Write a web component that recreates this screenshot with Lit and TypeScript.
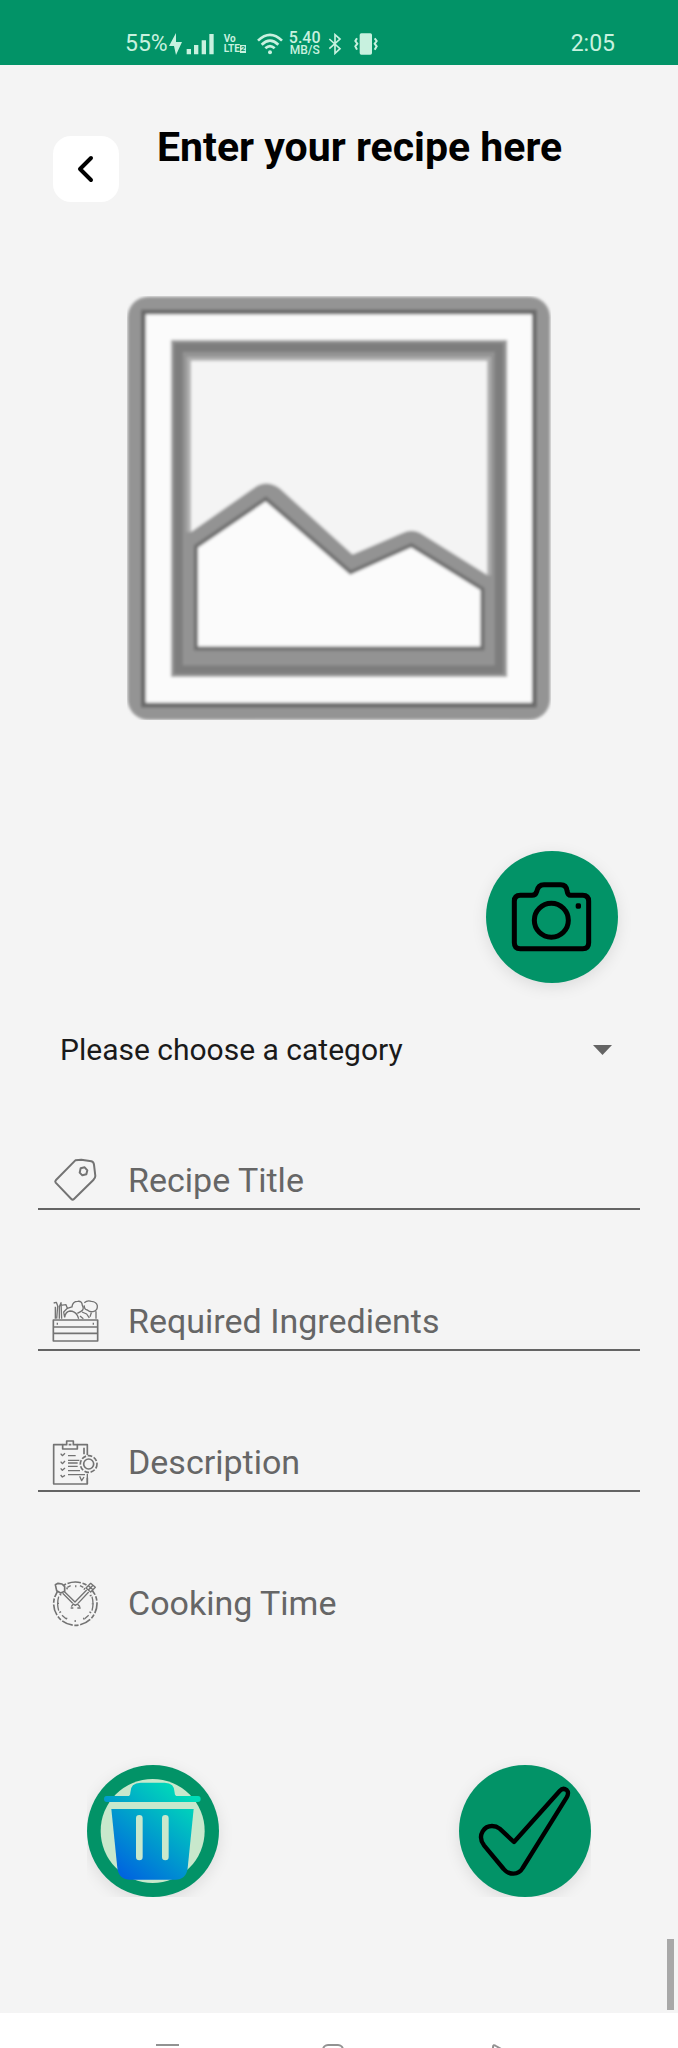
import { LitElement, html, css, svg, nothing } from "lit";
import { customElement, property } from "lit/decorators.js";

const tagIcon = svg`
  <path d="M136 61L154 59L184 64Q191 66 192 74L196 108Q196 114 190 120L132 177Q128 181 124 177L77 128Q74 124 78 120Z" stroke-width="6"/>
  <path d="M152 85L164 82L172 91L169 103L157 106L149 98Z" stroke-width="6"/>`;

const crateIcon = svg`
  <path d="M70 540H203V603H70ZM70 561H203M70 580H203" stroke-width="5"/>
  <path d="M82 548V554M190 548V554" stroke-width="4"/>
  <path d="M71 489L79 487L84 500M76 500V536M83 498L80 536M88 536V500L93 488L95 536M92 496L108 494L112 505L101 516L104 532M104 532Q106 515 120 513Q134 513 142 526L146 536M112 505L128 500M126 500Q128 484 143 484Q156 482 157 496Q164 508 153 514L142 520M163 488Q172 480 184 484Q199 485 202 497Q203 511 192 514Q181 518 172 510Q162 508 163 496M156 516L170 522L178 534M184 518L180 530M198 514V536M150 528L160 536" stroke-width="4"/>`;

const clipboardIcon = svg`
  <path d="M98 73H71V191H172V172M142 73H172V104" stroke-width="5"/>
  <path d="M98 73V86H142V73H130V62H110V73ZM116 73H124M162 82V102" stroke-width="5"/>
  <path d="M92 100L97 106L105 99M92 124L97 130L105 122M92 144L97 150L105 143M92 164L97 170L105 165" stroke-width="4"/>
  <path d="M114 106H137M114 120H148M114 128H143M114 138H143M114 151H150M114 163H165" stroke-width="4"/>
  <circle cx="176" cy="131" r="15" stroke-width="5"/>
  <circle cx="176" cy="131" r="25" stroke-width="5" stroke-dasharray="14 5"/>
  <path d="M149 168L155 181L162 170M172 160V190" stroke-width="4"/>`;

const clockIcon = svg`
  <circle cx="136" cy="551" r="65" stroke-width="5" stroke-dasharray="34 5 13 5" stroke-dashoffset="17" transform="rotate(-90 136 551)"/>
  <circle cx="136" cy="551" r="52" stroke-width="6" stroke-dasharray="4 23.200" stroke-dashoffset="2"/>
  <path d="M86 530Q80 551 86 572M186 530Q192 551 186 572M96 586L108 596M176 586L164 596M112 502L122 497M150 497L160 502" stroke-width="4"/>
  <path d="M102 514L135 546L170 510M98 520L128 550M176 516L144 550M124 560L130 552L136 556L142 552L150 560M122 564H130M142 564H152" stroke-width="4"/>
  <path d="M76 494L84 490L96 492L104 500L104 514L92 519L80 512Z" stroke-width="5" fill="#f4f4f4"/>
  <path d="M168 504L182 490L196 502L182 516ZM175 497L189 509M189 496L175 510" stroke-width="4" fill="#f4f4f4"/>`;

const backIcon = html`<svg class="chevron" viewBox="0 0 24 36" aria-hidden="true"><path d="M17 7L6 18L17 29" /></svg>`;

@customElement("status-bar")
class StatusBar extends LitElement {
  static styles = css`
    :host {
      display: flex;
      align-items: center;
      box-sizing: border-box;
      height: 65px;
      padding: 22px 63px 0 125px;
      background: #029367;
      color: #c8f1df;
      font-size: 23px;
      line-height: 24px;
    }
    svg { flex: none; fill: currentColor; }
    .bolt { width: 14px; height: 24px; }
    .signal { width: 28px; height: 22px; margin-left: 4px; }
    .volte { width: 24px; margin-left: 10px; font-size: 10px; line-height: 10px; font-weight: 700; }
    .volte div { display: flex; align-items: center; }
    .sim { background: currentColor; }
    .sim span { color: #029367; padding: 0 1px; font-size: 8px; line-height: 8px; display: block; }
    .wifi { width: 26px; height: 22px; margin-left: 9px; }
    .speed { width: 32px; margin-left: 6px; text-align: center; font-weight: 500; font-size: 16px; line-height: 12px; }
    .unit { font-size: 12px; line-height: 12px; }
    .bluetooth { width: 14px; height: 22px; margin-left: 7px; }
    .vibrate { width: 24px; height: 22px; margin-left: 12px; }
    .time { margin-left: auto; }
  `;

  render() {
    return html`
      <span>55%</span>
      <svg class="bolt" viewBox="0 0 14 24"><path d="M8 1L1 14H6L8 23L14 10H8Z" /></svg>
      <svg class="signal" viewBox="0 0 84 66">
        <path d="M2 48h13v16H2zM24 36h13v28H24zM47 22h13v42H47zM70 3h13v61H70z" />
      </svg>
      <div class="volte">
        <div>Vo</div>
        <div>LTE<span class="sim"><span>2</span></span></div>
      </div>
      <svg class="wifi" viewBox="0 0 78 66">
        <path d="M3 23Q39 -12 75 23M14 35Q39 11 64 35M25 46Q39 33 53 46" fill="none" stroke="currentColor" stroke-width="8" />
        <circle cx="39" cy="58" r="6" />
      </svg>
      <div class="speed">
        <div>5.40</div>
        <div class="unit">MB/S</div>
      </div>
      <svg class="bluetooth" viewBox="0 0 42 66">
        <path d="M4 18L36 47L21 61V5L36 18L4 47" fill="none" stroke="currentColor" stroke-width="5" />
      </svg>
      <svg class="vibrate" viewBox="0 0 72 66">
        <rect x="17" y="1" width="37" height="64" rx="5" />
        <path d="M9 16L4 24L10 32L4 40L9 50M62 16L68 24L62 32L68 40L62 50" fill="none" stroke="currentColor" stroke-width="6" />
      </svg>
      <span class="time">2:05</span>
    `;
  }
}

@customElement("recipe-field")
class RecipeField extends LitElement {
  @property() label = "";
  @property({ attribute: false }) icon: unknown = nothing;
  @property() box = "0 0 135 135";
  @property({ type: Boolean, reflect: true }) plain = false;

  static styles = css`
    :host {
      display: flex;
      align-items: center;
      gap: 30px;
      height: 56px;
      padding: 0 15px;
      border-bottom: 2px solid #646464;
    }
    :host([plain]) { border-color: transparent; }
    label { flex: none; display: flex; }
    .icon {
      width: 45px;
      height: 45px;
      fill: none;
      stroke: #737373;
      stroke-linejoin: round;
      overflow: visible;
    }
    input {
      flex: 1;
      min-width: 0;
      height: 48px;
      padding: 0;
      border: 0;
      outline: 0;
      background: none;
      color: #212121;
      font: 34px/48px Roboto, sans-serif;
    }
    input::placeholder { color: #666; opacity: 1; }
  `;

  render() {
    return html`
      <label for="entry"><svg class="icon" viewBox=${this.box} aria-hidden="true">${this.icon}</svg></label>
      <input id="entry" type="text" aria-label=${this.label} placeholder=${this.label} />
    `;
  }
}

@customElement("app-root")
class AppRoot extends LitElement {
  static styles = css`
    :host {
      display: flex;
      flex-direction: column;
      min-height: 100vh;
      background: #f4f4f4;
      font-family: Roboto, sans-serif;
    }
    main { position: relative; flex: 1; }
    header {
      display: flex;
      align-items: flex-start;
      gap: 38px;
      padding: 58px 53px 0;
    }
    h1 { margin: 0; font-size: 41px; line-height: 48px; font-weight: 700; color: #000; }
    button { border: 0; padding: 0; cursor: pointer; }
    .back {
      flex: none;
      display: grid;
      place-items: center;
      width: 66px;
      height: 66px;
      margin-top: 13px;
      border-radius: 18px;
      background: #fff;
    }
    .chevron {
      width: 24px;
      height: 36px;
      fill: none;
      stroke: #000;
      stroke-width: 4;
      stroke-linecap: round;
      stroke-linejoin: round;
    }
    .photo { display: block; width: 62.5%; margin: 94px auto 0; }
    .fab {
      display: block;
      width: 132px;
      height: 132px;
      border-radius: 50%;
      background: #029367;
      box-shadow: 0 4px 16px rgba(0, 0, 0, 0.1);
    }
    .fab svg { display: block; width: 100%; height: 100%; }
    .line { fill: none; stroke: #000; stroke-linejoin: round; }
    .camera { margin: 131px 60px 0 auto; }
    .category {
      display: grid;
      align-items: center;
      height: 60px;
      margin: 37px 60px 72px;
    }
    .category > * { grid-area: 1 / 1; }
    select {
      appearance: none;
      width: 100%;
      height: 60px;
      padding: 0;
      border: 0;
      background: none;
      color: #1a1a1a;
      font: 30px/60px Roboto, sans-serif;
    }
    .arrow { width: 19px; height: 10px; justify-self: end; margin-right: 6px; fill: #646464; pointer-events: none; }
    .fields { display: grid; gap: 83px; margin: 0 38px; }
    .actions {
      display: flex;
      justify-content: space-between;
      margin: 108px 87px 0;
      padding-top: 24px;
      overflow: hidden;
    }
    .scrollbar {
      position: absolute;
      right: 4px;
      bottom: 3px;
      width: 7px;
      height: 71px;
      background: #a8a8a8;
    }
    nav {
      display: flex;
      justify-content: space-between;
      align-items: flex-start;
      box-sizing: border-box;
      height: 35px;
      padding: 30px 167px 0 155px;
      background: #fff;
      overflow: hidden;
    }
    nav button { background: none; height: 24px; }
    nav svg { display: block; width: 26px; height: 24px; fill: none; stroke: #929292; stroke-width: 2; stroke-linejoin: round; }
  `;

  private photo() {
    return html`
      <svg class="photo" viewBox="51 46 1272 1274" role="img" aria-label="Recipe photo">
        <defs>
          <filter id="soft" x="-5%" y="-5%" width="110%" height="110%"><feGaussianBlur stdDeviation="5" /></filter>
        </defs>
        <g filter="url(#soft)">
          <rect x="53" y="48" width="1268" height="1270" rx="62" fill="#949494" />
          <rect x="100" y="94" width="1174" height="1180" fill="#fbfbfb" stroke="#696969" stroke-width="14" />
          <rect x="187" y="182" width="1001" height="1004" fill="#939393" />
          <path d="M205 200H1168V1168H205Z" fill="none" stroke="#7d7d7d" stroke-width="26" />
          <path d="M187 182H1188V1186H187Z" fill="none" stroke="#999" stroke-width="8" />
          <path d="M242 238H1135V885L930 757Q905 745 880 757L728 822L510 624Q468 594 430 624L242 755Z" fill="#f4f4f4" />
          <path d="M236 755V234H1138V885" fill="none" stroke="#adadad" stroke-width="12" />
          <path d="M258 798L468 655L722 876L905 794L1118 926V1104H258Z" fill="#fbfbfb" stroke="#707070" stroke-width="12" />
        </g>
      </svg>
    `;
  }

  render() {
    return html`
      <status-bar></status-bar>
      <main>
        <header>
          <button class="back" aria-label="Back">${backIcon}</button>
          <h1>Enter your recipe here</h1>
        </header>
        ${this.photo()}
        <button class="fab camera" aria-label="Take photo">
          <svg viewBox="78 62 396 396">
            <g class="line" stroke-width="15">
              <path d="M163 213Q163 195 181 195H216Q227 195 230 184Q234 163 252 163H302Q319 163 321 181Q323 195 332 195H368Q386 195 386 213V337Q386 355 368 355H181Q163 355 163 337Z" />
              <circle cx="274" cy="270" r="51" />
            </g>
            <rect x="347" y="219" width="16" height="16" rx="5" />
          </svg>
        </button>
        <div class="category">
          <select aria-label="Category">
            <option>Please choose a category</option>
          </select>
          <svg class="arrow" viewBox="0 0 19 10" aria-hidden="true"><path d="M0 0H19L9.500 10Z" /></svg>
        </div>
        <div class="fields">
          <recipe-field label="Recipe Title" box="69 54 135 135" .icon=${tagIcon}></recipe-field>
          <recipe-field label="Required Ingredients" box="69 477 135 135" .icon=${crateIcon}></recipe-field>
          <recipe-field label="Description" box="69 59 135 135" .icon=${clipboardIcon}></recipe-field>
          <recipe-field label="Cooking Time" box="69 483 135 135" .icon=${clockIcon} plain></recipe-field>
        </div>
        <div class="actions">
          <button class="fab" aria-label="Delete recipe">
            <svg viewBox="50 75 396 396">
              <defs>
                <linearGradient id="bin" gradientUnits="userSpaceOnUse" x1="150" y1="410" x2="350" y2="160">
                  <stop offset="0" stop-color="#0062e0" />
                  <stop offset="1" stop-color="#00dcb8" />
                </linearGradient>
              </defs>
              <circle cx="247" cy="273" r="156" fill="#c8e8cc" />
              <g fill="url(#bin)">
                <path d="M109 168H172Q180 168 180 158Q180 128 211 128H283Q313 128 313 158Q313 168 322 168H383Q391 168 391 177Q391 186 383 186H109Q101 186 101 177Q101 168 109 168Z" />
                <path d="M123 207H370L352 384Q348 419 314 419H180Q145 419 141 384Z" />
              </g>
              <path d="M207 235V351M285 235V351" stroke="#c8e8cc" stroke-width="20" stroke-linecap="round" />
            </svg>
          </button>
          <button class="fab" aria-label="Save recipe">
            <svg viewBox="59 75 396 396">
              <path class="line" stroke-width="13" d="M224 306L361 153Q371 142 382 150Q390 158 382 172L250 384Q241 400 222 401Q204 401 193 387L134 316Q118 294 130 274Q140 258 158 258Q171 258 181 266Z" />
            </svg>
          </button>
        </div>
        <div class="scrollbar"></div>
      </main>
      <nav>
        <button aria-label="Recent apps"><svg viewBox="0 0 26 24"><path d="M1 2H24M1 11H24M1 20H24" /></svg></button>
        <button aria-label="Home"><svg viewBox="0 0 26 24"><rect x="3" y="2" width="20" height="20" rx="5" /></svg></button>
        <button aria-label="Go back"><svg viewBox="0 0 26 24"><path d="M8 4Q8 1 11 3L23 10Q25 12 23 14L11 21Q8 22 8 19Z" /></svg></button>
      </nav>
    `;
  }
}
